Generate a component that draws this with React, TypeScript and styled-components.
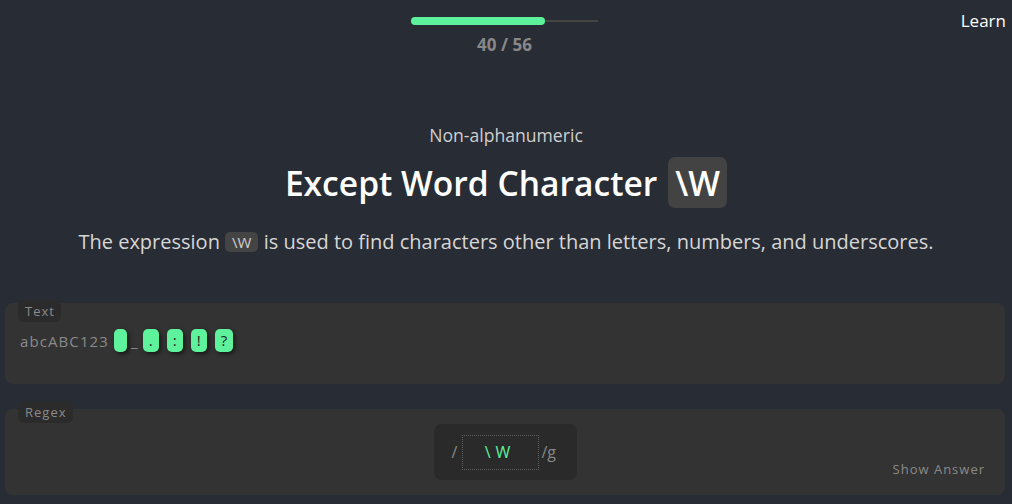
import React from "react";
import styled, { createGlobalStyle } from "styled-components";

const Global = createGlobalStyle`
  html, body { margin: 0; padding: 0; background: #282c34; }
  body { font-family: "Open Sans", "Noto Sans", sans-serif; color: #ddd; }
  * { box-sizing: border-box; }
`;

const Page = styled.div`
  width: 1012px;
  height: 504px;
  overflow: hidden;
  display: flex;
  flex-direction: column;
`;

const Header = styled.header`
  display: grid;
  grid-template-columns: 1fr 187px 1fr;
  padding: 9px 3px 0 0;
`;

const Progress = styled.div`
  grid-column: 2;
  display: flex;
  flex-direction: column;
  align-items: center;
  padding-top: 8px;
`;

const Bar = styled.div`
  width: 100%;
  height: 8px;
  display: flex;
  align-items: center;
`;

const Fill = styled.div`
  height: 8px;
  border-radius: 4px;
  background: #5cf29b;
`;

const Rest = styled.div`
  flex: 1;
  height: 2px;
  background: #444;
`;

const Count = styled.div`
  margin-top: 10px;
  font-size: 17px;
  line-height: 20px;
  font-weight: 700;
  color: #888;
`;

const LearnLink = styled.a`
  grid-column: 3;
  justify-self: end;
  align-self: start;
  margin-right: 3px;
  font-size: 17px;
  line-height: 24px;
  color: #fff;
  text-decoration: none;
`;

const Hero = styled.section`
  display: flex;
  flex-direction: column;
  align-items: center;
  margin-top: 68px;
`;

const Subtitle = styled.div`
  font-size: 17.6px;
  line-height: 24px;
  color: #cfcfcf;
`;

const Title = styled.h1`
  margin: 10px 0 0;
  display: flex;
  align-items: center;
  height: 51px;
  font-size: 33.6px;
  font-weight: 600;
  color: #fff;
`;

const TitleCode = styled.span`
  margin-left: 11px;
  height: 51px;
  display: inline-flex;
  align-items: center;
  padding: 0 7px;
  border-radius: 7px;
  background: #434343;
`;

const Description = styled.p`
  margin: 20px 0 0;
  font-size: 20px;
  line-height: 28px;
  color: #d6d6d6;
`;

const InlineCode = styled.code`
  display: inline-block;
  font-family: "Open Sans", sans-serif;
  font-size: 15px;
  line-height: 20px;
  padding: 0 7px;
  border-radius: 5px;
  background: #444;
  color: #cfcfcf;
  vertical-align: 1px;
`;

const Section = styled.section<{ $top: number; $gap: number }>`
  position: relative;
  margin: ${(p) => p.$top}px 7px 0 5px;
  padding-top: ${(p) => p.$gap}px;
`;

const Tag = styled.div<{ $lift?: number }>`
  position: absolute;
  top: ${(p) => -(p.$lift || 0)}px;
  left: 13px;
  height: 22px;
  line-height: 22px;
  padding: 0 6px 0 7px;
  border-radius: 6px;
  background: #2b2b2b;
  color: #8a8a8a;
  font-size: 13px;
  letter-spacing: 1px;
  z-index: 1;
`;

const Panel = styled.div<{ $h: number }>`
  height: ${(p) => p.$h}px;
  background: #333;
  border-radius: 8px;
`;

const TextPanel = styled(Panel)`
  padding: 26px 15px 0;
`;

const Sample = styled.div`
  display: flex;
  align-items: center;
  height: 23px;
  font-size: 15px;
  letter-spacing: 1.1px;
  color: #8a8a8a;
  white-space: pre;
`;

const Match = styled.span`
  display: inline-block;
  height: 23px;
  line-height: 23px;
  padding: 0 5px 0 6px;
  margin: 0 4px;
  border-radius: 5px;
  background: #5ef29c;
  color: #222;
  box-shadow: 2px 2px 4px rgba(0, 0, 0, 0.55);
`;

const SpaceMatch = styled(Match)`
  padding: 0 4px;
  margin: 0 4px 0 5px;
`;

const RegexPanel = styled(Panel)`
  display: grid;
  grid-template-columns: 1fr auto 1fr;
  padding: 15px 20px;
`;

const RegexBox = styled.div`
  grid-column: 2;
  width: 143px;
  height: 56px;
  display: flex;
  align-items: center;
  padding: 0 0 0 18px;
  border-radius: 8px;
  background: #2a2a2a;
  color: #888;
  font-size: 16px;
`;

const Slash = styled.span`
  width: 10px;
`;

const RegexInput = styled.div`
  width: 77px;
  height: 35px;
  display: flex;
  align-items: center;
  justify-content: center;
  border: 1px dotted #5d5d5d;
  color: #5cf29b;
  font-size: 16px;
  letter-spacing: 5px;
`;

const Flags = styled.span`
  margin-left: 3px;
`;

const ShowAnswer = styled.button`
  grid-column: 3;
  justify-self: end;
  align-self: end;
  margin-bottom: 2px;
  padding: 0;
  border: none;
  background: none;
  color: #8a8a8a;
  font-family: "Open Sans", sans-serif;
  font-size: 13px;
  line-height: 18px;
  letter-spacing: 1px;
`;

export default function App() {
  const done = 40;
  const total = 56;
  return (
    <Page>
      <Global />
      <Header>
        <Progress>
          <Bar>
            <Fill style={{ width: `${(done / total) * 100}%` }} />
            <Rest />
          </Bar>
          <Count>
            {done} / {total}
          </Count>
        </Progress>
        <LearnLink href="#">Learn</LearnLink>
      </Header>

      <Hero>
        <Subtitle>Non-alphanumeric</Subtitle>
        <Title>
          Except Word Character <TitleCode>\W</TitleCode>
        </Title>
        <Description>
          The expression <InlineCode>\W</InlineCode> is used to find characters other than letters, numbers, and
          underscores.
        </Description>
      </Hero>

      <Section $top={45} $gap={2}>
        <Tag $lift={1}>Text</Tag>
        <TextPanel $h={81}>
          <Sample>
            abcABC123
            <SpaceMatch> </SpaceMatch>_<Match>.</Match>
            <Match>:</Match>
            <Match>!</Match>
            <Match>?</Match>
          </Sample>
        </TextPanel>
      </Section>

      <Section $top={17} $gap={8}>
        <Tag>Regex</Tag>
        <RegexPanel $h={86}>
          <RegexBox>
            <Slash>/</Slash>
            <RegexInput>\W</RegexInput>
            <Flags>/g</Flags>
          </RegexBox>
          <ShowAnswer>Show Answer</ShowAnswer>
        </RegexPanel>
      </Section>
    </Page>
  );
}
